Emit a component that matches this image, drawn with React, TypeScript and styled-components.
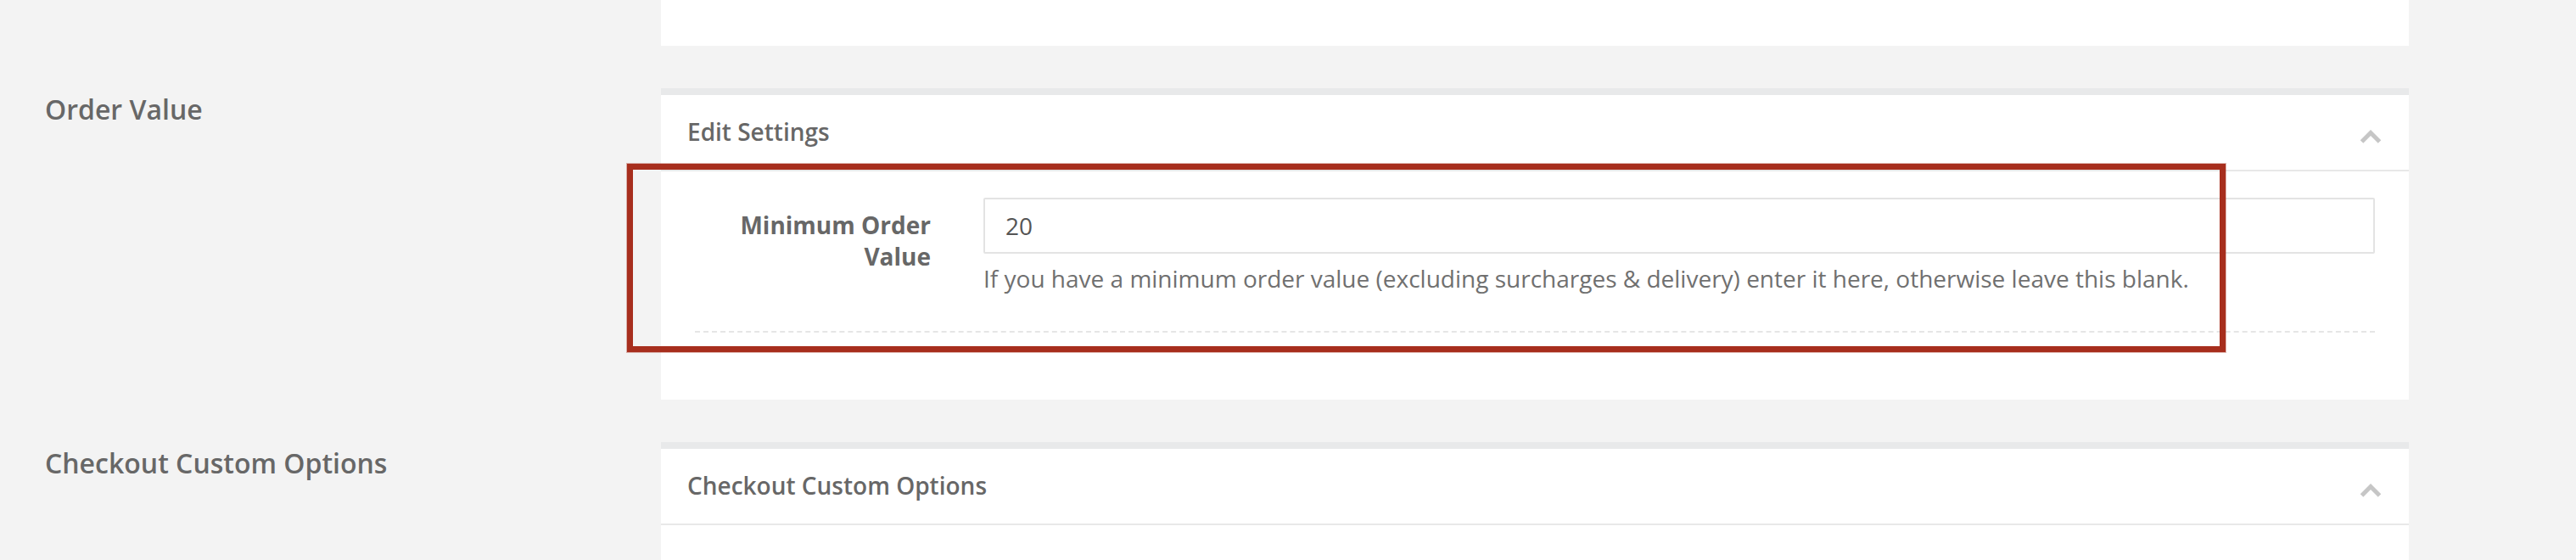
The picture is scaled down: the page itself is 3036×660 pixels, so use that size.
import React from "react";
import styled, { createGlobalStyle } from "styled-components";

const GlobalStyle = createGlobalStyle`
  body {
    margin: 0;
    background: #f3f3f3;
    font-family: "Open Sans", "Liberation Sans", sans-serif;
    color: #676767;
  }
`;

const Page = styled.div`
  padding-left: 53px;
  display: flex;
  flex-direction: column;
  gap: 50px;
`;

const Section = styled.section`
  display: grid;
  grid-template-columns: 726px 2060px;
`;

const SideLabel = styled.h3`
  margin: 0;
  padding-top: 3px;
  font-size: 32px;
  font-weight: 600;
  line-height: 1.4;
  color: #676767;
`;

const Panel = styled.div<{ $stub?: boolean }>`
  position: relative;
  background: #fff;
  border-top: ${(p) => (p.$stub ? "none" : "8px solid #e8e9ea")};
  height: ${(p) => (p.$stub ? "54px" : "auto")};
`;

const PanelHeader = styled.div`
  box-sizing: border-box;
  height: 90px;
  border-bottom: 2px solid #e8e8e8;
  display: flex;
  align-items: center;
  justify-content: space-between;
  padding: 0 32px 0 31px;
`;

const PanelTitle = styled.h4`
  margin: 0 0 2px;
  font-size: 28px;
  font-weight: 600;
  color: #676767;
`;

const Chevron = styled.svg`
  margin-top: 10px;
  display: block;
`;

const PanelBody = styled.div<{ $empty?: boolean }>`
  padding: ${(p) => (p.$empty ? "0" : "31px 40px 79px")};
  height: ${(p) => (p.$empty ? "80px" : "auto")};
`;

const FieldRow = styled.div`
  display: grid;
  grid-template-columns: 340px 1fr;
  padding-bottom: 42px;
  border-bottom: 2px dashed #e6e6e6;
`;

const FieldLabel = styled.label`
  text-align: right;
  padding: 14px 62px 0 0;
  font-size: 28px;
  font-weight: 700;
  line-height: 37px;
  color: #676767;
`;

const FieldControl = styled.div`
  display: flex;
  flex-direction: column;
`;

const TextInput = styled.input`
  box-sizing: border-box;
  height: 66px;
  width: 100%;
  border: 2px solid #e3e3e3;
  border-radius: 2px;
  padding: 0 24px;
  font-family: inherit;
  font-size: 28px;
  color: #555;
  outline: none;
`;

const HelpText = styled.p`
  margin: 10px 0 0;
  font-size: 28px;
  line-height: 1.4;
  color: #707070;
`;

const Highlight = styled.div`
  position: absolute;
  left: -40px;
  top: 81px;
  width: 1884px;
  height: 222px;
  box-sizing: border-box;
  border: 7px solid #a72e1d;
  box-shadow: 0 0 0 1px rgba(167, 46, 29, 0.35);
  pointer-events: none;
`;

function ChevronUp() {
  return (
    <Chevron width="26" height="17" viewBox="0 0 26 17">
      <polyline points="2.5,14 13,3.5 23.5,14" fill="none" stroke="#c6c6c6" strokeWidth="5" />
    </Chevron>
  );
}

export default function App() {
  return (
    <>
      <GlobalStyle />
      <Page>
        <Section>
          <div />
          <Panel $stub />
        </Section>

        <Section>
          <SideLabel>Order Value</SideLabel>
          <Panel>
            <PanelHeader>
              <PanelTitle>Edit Settings</PanelTitle>
              <ChevronUp />
            </PanelHeader>
            <PanelBody>
              <FieldRow>
                <FieldLabel htmlFor="min-order">Minimum Order Value</FieldLabel>
                <FieldControl>
                  <TextInput id="min-order" defaultValue="20" />
                  <HelpText>
                    If you have a minimum order value (excluding surcharges &amp; delivery) enter it here, otherwise
                    leave this blank.
                  </HelpText>
                </FieldControl>
              </FieldRow>
            </PanelBody>
            <Highlight />
          </Panel>
        </Section>

        <Section>
          <SideLabel>Checkout Custom Options</SideLabel>
          <Panel>
            <PanelHeader>
              <PanelTitle>Checkout Custom Options</PanelTitle>
              <ChevronUp />
            </PanelHeader>
            <PanelBody $empty />
          </Panel>
        </Section>
      </Page>
    </>
  );
}
